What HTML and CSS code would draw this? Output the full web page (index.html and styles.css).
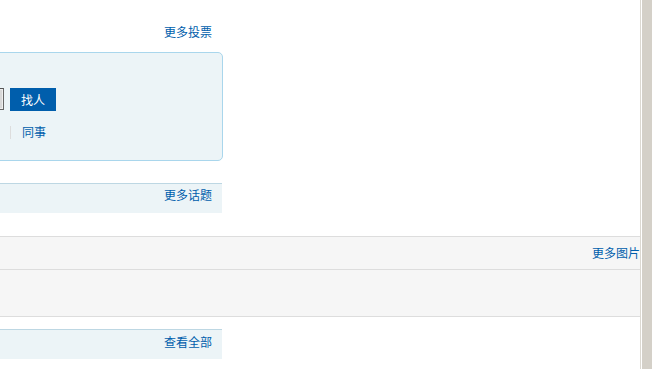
FILE: index.html
```html
<!DOCTYPE html>
<html lang="zh">
<head>
<meta charset="utf-8">
<title>页面</title>
<link rel="stylesheet" href="styles.css">
</head>
<body>
<div class="page">
  <div class="col">
    <div class="more-row"><a class="link" href="#">更多投票</a></div>
    <div class="box">
      <div class="search-row">
        <span class="input"></span>
        <span class="btn">找人</span>
      </div>
      <div class="tag-row">
        <span class="sep"></span>
        <a class="link tag" href="#">同事</a>
      </div>
    </div>
    <div class="bar bar-topic"><a class="link" href="#">更多话题</a></div>
  </div>
  <div class="gray">
    <div class="gray-head"><a class="link" href="#">更多图片</a></div>
    <div class="gray-body"></div>
  </div>
  <div class="col">
    <div class="bar bar-all"><a class="link" href="#">查看全部</a></div>
  </div>
</div>
<div class="scrollbar"></div>
</body>
</html>
```
FILE: styles.css
```css
html, body {
  margin: 0;
  padding: 0;
  background: #ffffff;
}
body {
  display: flex;
  height: 369px;
  overflow: hidden;
  font-family: "Noto Sans CJK SC", "Noto Sans", sans-serif;
  font-size: 12px;
  line-height: 16px;
}
.page {
  width: 640px;
  flex: none;
  overflow: hidden;
}
.scrollbar {
  width: 10px;
  flex: none;
  background: #d4d0c8;
  border-left: 1px solid #dcd9d2;
  box-shadow: inset 1px 0 0 #ffffff;
  padding-left: 1px;
}
.link {
  color: #005eac;
  text-decoration: none;
}
.col {
  width: 222px;
}
.more-row {
  padding-top: 24px;
  padding-right: 10px;
  text-align: right;
  box-sizing: border-box;
  height: 52px;
}
.box {
  margin-left: -21px;
  margin-right: -1px;
  background: #ecf4f7;
  border: 1px solid #a9d6ec;
  border-radius: 5px;
  padding: 35px 0 21px 0;
}
.search-row {
  display: flex;
  gap: 6px;
  height: 23px;
}
.input {
  width: 22px;
  height: 20px;
  border: 1px solid #666666;
  border-top-color: #555555;
  background: #d8d8d8;
  box-shadow: inset 0 0 0 1px #eeeeee;
}
.btn {
  width: 46px;
  height: 23px;
  background: #005eac;
  color: #ffffff;
  text-align: center;
  line-height: 23px;
}
.tag-row {
  display: flex;
  align-items: center;
  margin-top: 14px;
  padding-left: 30px;
  height: 14px;
}
.sep {
  width: 1px;
  height: 13px;
  background: #dddddd;
}
.tag {
  margin-left: 11px;
  line-height: 14px;
}
.bar {
  background: #ecf4f7;
  border-top: 1px solid #bdd7e3;
  text-align: right;
  padding-right: 10px;
  padding-top: 3px;
  height: 26px;
}
.bar-topic {
  margin-top: 22px;
}
.gray {
  margin-top: 23px;
  background: #f6f6f6;
  border-top: 1px solid #dddddd;
  border-bottom: 1px solid #dddddd;
}
.gray-head {
  height: 32px;
  line-height: 32px;
  text-align: right;
  border-bottom: 1px solid #dddddd;
}
.gray-body {
  height: 46px;
}
.bar-all {
  margin-top: 12px;
  padding-top: 4px;
  height: 25px;
}
```
